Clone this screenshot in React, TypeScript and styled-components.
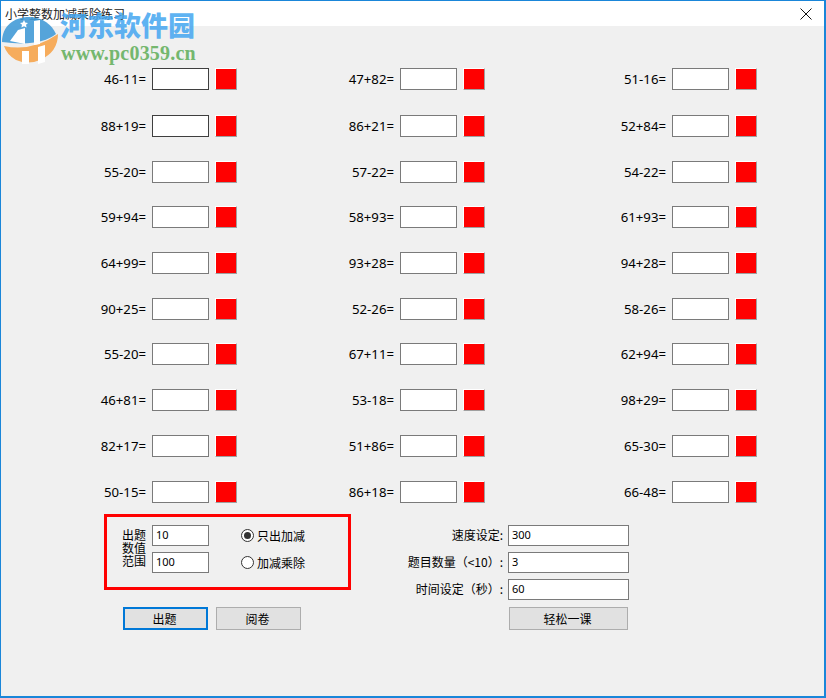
import React from "react";
import styled, { createGlobalStyle } from "styled-components";

const Global = createGlobalStyle`
  html, body { margin: 0; padding: 0; background: #f0f0f0; }
  body { font-family: "Noto Sans", "Noto Sans CJK SC", sans-serif; font-size: 12px; color: #000; }
`;

const Window = styled.div`
  position: relative;
  box-sizing: border-box;
  width: 826px;
  height: 698px;
  border: 1px solid #1a86d9;
  border-width: 1px 2px 2px 1px;
  background: #f0f0f0;
  overflow: hidden;
`;

const TitleBar = styled.div`
  height: 25px;
  background: #fff;
  display: flex;
  align-items: center;
  justify-content: space-between;
  padding: 0 12px 0 4px;
  font-family: "Noto Sans CJK SC", sans-serif;
  font-size: 12px;
  color: #222;
`;

const CloseIcon = styled.svg`
  width: 12px;
  height: 12px;
  display: block;
`;

const Problems = styled.div`
  display: grid;
  grid-template-columns: 236px 248px 272px;
  grid-template-rows: 47px repeat(8, 45.7px) 23px;
  margin-top: 42px;
`;

const Problem = styled.div`
  display: flex;
  justify-content: flex-end;
  align-items: flex-start;
`;

const Expression = styled.span`
  font-size: 13.2px;
  line-height: 22px;
  margin-right: 6px;
  white-space: nowrap;
`;

const Field = styled.div<{ $w?: number; $focus?: boolean }>`
  box-sizing: border-box;
  width: ${(p) => p.$w ?? 57}px;
  height: 21px;
  background: #fff;
  border: 1px solid ${(p) => (p.$focus ? "#3f3f3f" : "#7a7a7a")};
  padding-left: 3px;
  font-size: 11px;
  line-height: 18px;
`;

const AnswerField = styled(Field)`
  height: 22px;
`;

const Lamp = styled.div`
  box-sizing: border-box;
  width: 22px;
  height: 22px;
  margin-left: 6px;
  background: #ff0000;
  border: 1px solid;
  border-color: #fff #a0a0a0 #a0a0a0 #fff;
`;

const Bottom = styled.div`
  display: flex;
  align-items: flex-start;
  margin-top: 10px;
  padding-left: 103px;
`;

const LeftColumn = styled.div`
  display: flex;
  flex-direction: column;
`;

const RedBox = styled.div`
  box-sizing: border-box;
  width: 247px;
  height: 76px;
  border: 3px solid #ff0000;
  padding: 8px 0 0 15px;
  display: flex;
`;

const StackedLabel = styled.div`
  width: 24px;
  margin: 3px 6px 0 0;
  line-height: 13px;
  font-family: "Noto Sans CJK SC", sans-serif;
  font-size: 12px;
`;

const FieldStack = styled.div`
  display: flex;
  flex-direction: column;
  gap: 6px;
`;

const RadioStack = styled(FieldStack)`
  margin-left: 32px;
`;

const RadioRow = styled.div`
  display: flex;
  align-items: center;
  height: 21px;
  gap: 3px;
  font-family: "Noto Sans CJK SC", sans-serif;
`;

const RadioMark = styled.span<{ $on?: boolean }>`
  box-sizing: border-box;
  width: 13px;
  height: 13px;
  border: 1px solid #333;
  border-radius: 50%;
  background: #fff;
  display: flex;
  align-items: center;
  justify-content: center;
  &::after {
    content: "";
    width: 7px;
    height: 7px;
    border-radius: 50%;
    background: ${(p) => (p.$on ? "#333" : "transparent")};
  }
`;

const ButtonRow = styled.div`
  display: flex;
  gap: 8px;
  margin: 17px 0 0 19px;
`;

const Button = styled.button<{ $w?: number; $focus?: boolean }>`
  box-sizing: border-box;
  width: ${(p) => p.$w ?? 85}px;
  height: 23px;
  padding: 0 2px 0 0;
  background: #e1e1e1;
  border: ${(p) => (p.$focus ? "2px solid #0078d7" : "1px solid #adadad")};
  font-family: "Noto Sans CJK SC", sans-serif;
  font-size: 12px;
  color: #000;
`;

const RightColumn = styled.div`
  display: grid;
  grid-template-columns: 153px 121px;
  column-gap: 4px;
  row-gap: 6px;
  margin-top: 11px;
`;

const FormLabel = styled.label`
  text-align: right;
  line-height: 20px;
  padding-right: 1px;
  font-family: "Noto Sans CJK SC", sans-serif;
  font-size: 12px;
  white-space: nowrap;
`;

const ButtonCell = styled.div`
  grid-column: 2;
  padding-left: 1px;
  margin-top: 1px;
`;

const Watermark = styled.div`
  position: absolute;
  left: -1px;
  top: -1px;
  width: 210px;
  height: 66px;
  pointer-events: none;
`;

const LogoMark = styled.svg`
  position: absolute;
  left: 0;
  top: 14px;
  width: 58px;
  height: 50px;
`;

const BrandName = styled.div`
  position: absolute;
  left: 60px;
  top: 8px;
  font-family: "Noto Sans CJK SC", sans-serif;
  font-weight: 900;
  font-size: 27px;
  line-height: 34px;
  color: rgba(66, 165, 240, 0.85);
  white-space: nowrap;
`;

const BrandUrl = styled.div`
  position: absolute;
  left: 61px;
  top: 42px;
  font-family: "Liberation Serif", serif;
  font-weight: 700;
  font-size: 20px;
  line-height: 22px;
  letter-spacing: 0.2px;
  color: #74b76e;
  white-space: nowrap;
`;

const rows = [
  ["46-11=", "47+82=", "51-16="],
  ["88+19=", "86+21=", "52+84="],
  ["55-20=", "57-22=", "54-22="],
  ["59+94=", "58+93=", "61+93="],
  ["64+99=", "93+28=", "94+28="],
  ["90+25=", "52-26=", "58-26="],
  ["55-20=", "67+11=", "62+94="],
  ["46+81=", "53-18=", "98+29="],
  ["82+17=", "51+86=", "65-30="],
  ["50-15=", "86+18=", "66-48="],
];

export default function App() {
  return (
    <Window>
      <Global />
      <TitleBar>
        <span>小学整数加减乘除练习</span>
        <CloseIcon viewBox="0 0 12 12">
          <path d="M0.5 0.5 L11.5 11.5 M11.5 0.5 L0.5 11.5" stroke="#111" strokeWidth="1" fill="none" />
        </CloseIcon>
      </TitleBar>
      <Problems>
        {rows.flatMap((row, r) =>
          row.map((text, c) => (
            <Problem key={`${r}-${c}`}>
              <Expression>{text}</Expression>
              <AnswerField $focus={c === 0 && r < 2} />
              <Lamp />
            </Problem>
          ))
        )}
      </Problems>
      <Bottom>
        <LeftColumn>
          <RedBox>
            <StackedLabel>出题 数值 范围</StackedLabel>
            <FieldStack>
              <Field>10</Field>
              <Field>100</Field>
            </FieldStack>
            <RadioStack>
              <RadioRow>
                <RadioMark $on />
                只出加减
              </RadioRow>
              <RadioRow>
                <RadioMark />
                加减乘除
              </RadioRow>
            </RadioStack>
          </RedBox>
          <ButtonRow>
            <Button $focus>出题</Button>
            <Button>阅卷</Button>
          </ButtonRow>
        </LeftColumn>
        <RightColumn>
          <FormLabel>速度设定:</FormLabel>
          <Field $w={121}>300</Field>
          <FormLabel>题目数量（&lt;10）:</FormLabel>
          <Field $w={121}>3</Field>
          <FormLabel>时间设定（秒）:</FormLabel>
          <Field $w={121}>60</Field>
          <ButtonCell>
            <Button $w={119}>轻松一课</Button>
          </ButtonCell>
        </RightColumn>
      </Bottom>
      <Watermark>
        <LogoMark viewBox="0 0 58 50">
          <path d="M2 28 C2 12 14 3 29 3 C43 3 52 11 56 20 Q40 33 2 28 Z" fill="#3f98d6" opacity="0.88" />
          <path d="M4 32 Q32 38 58 20 Q58 38 40 46 Q28 51 16 46 Q7 41 4 32 Z" fill="#f5a853" opacity="0.95" />
          <path d="M10 27 L18 16 L25 14 L25 30 Z" fill="#fff" />
          <path d="M34 7 L40 6 L40 30 L34 31 Z" fill="#fff" />
          <path d="M22 37 L29 37 L29 50 L22 50 Z" fill="#fff" />
          <path d="M38 33 L45 31 L45 48 L38 50 Z" fill="#fff" />
          <path d="M24 6 l1.2 2.6 2.8.3-2 1.9.6 2.8-2.6-1.4-2.6 1.4.6-2.8-2-1.9 2.8-.3z" fill="#fff" />
        </LogoMark>
        <BrandName>河东软件园</BrandName>
        <BrandUrl>www.pc0359.cn</BrandUrl>
      </Watermark>
    </Window>
  );
}
